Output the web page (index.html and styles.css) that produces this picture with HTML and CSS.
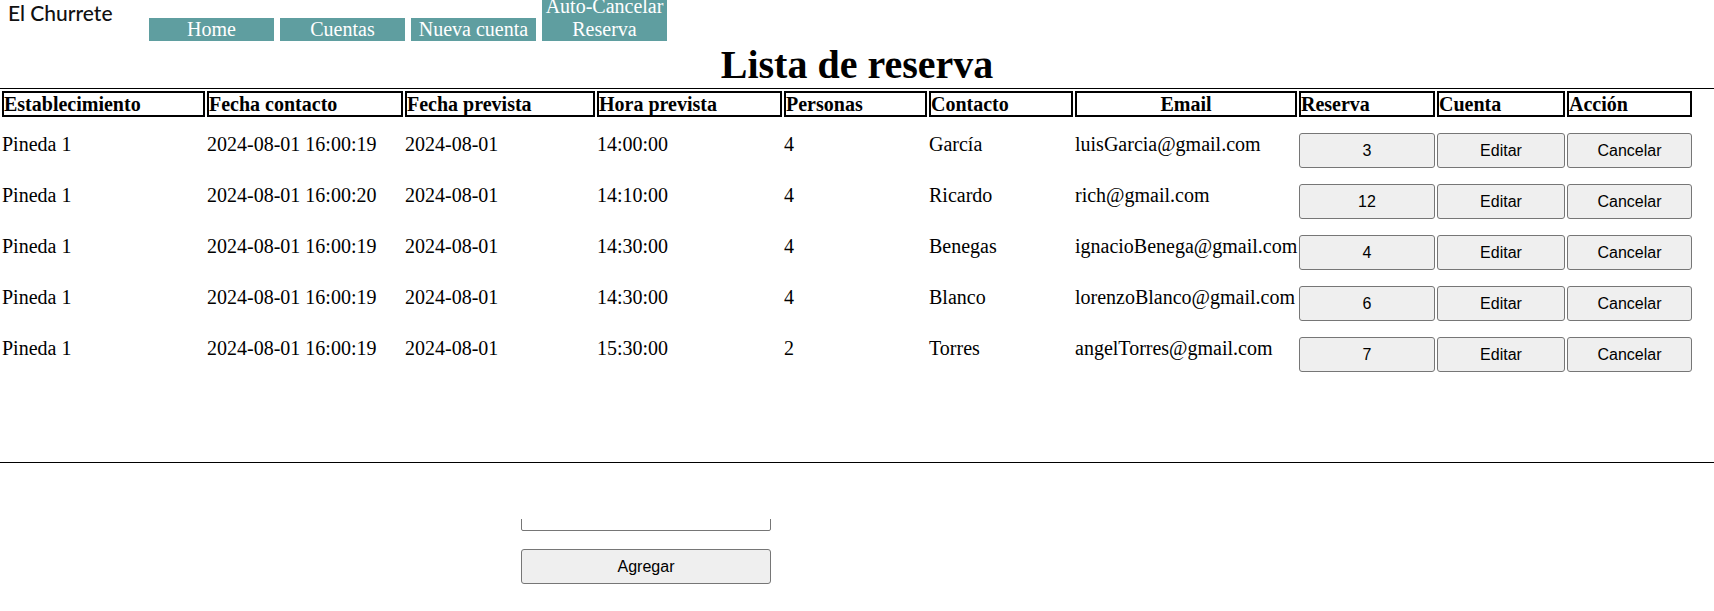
FILE: index.html
```html
<!DOCTYPE html>
<html lang="es">
<head>
<meta charset="utf-8">
<title>Lista de reserva</title>
<link rel="stylesheet" href="styles.css">
</head>
<body>
<header class="topbar">
  <div class="brand">El Churrete</div>
  <nav class="nav">
    <a class="nav-btn" href="#">Home</a>
    <a class="nav-btn" href="#">Cuentas</a>
    <a class="nav-btn" href="#">Nueva cuenta</a>
    <a class="nav-btn" href="#">Auto-Cancelar Reserva</a>
  </nav>
</header>
<h1 class="title">Lista de reserva</h1>
<div class="table-wrap">
  <table class="res-table">
    <thead>
      <tr>
        <th class="c1">Establecimiento</th>
        <th class="c2">Fecha contacto</th>
        <th class="c3">Fecha prevista</th>
        <th class="c4">Hora prevista</th>
        <th class="c5">Personas</th>
        <th class="c6">Contacto</th>
        <th class="c7 center">Email</th>
        <th class="c8">Reserva</th>
        <th class="c9">Cuenta</th>
        <th class="c10">Acción</th>
      </tr>
    </thead>
    <tbody>
      <tr>
        <td>Pineda 1</td><td>2024-08-01 16:00:19</td><td>2024-08-01</td><td>14:00:00</td><td>4</td><td>García</td><td>luisGarcia@gmail.com</td>
        <td class="act"><button class="row-btn">3</button></td><td class="act"><button class="row-btn">Editar</button></td><td class="act"><button class="row-btn">Cancelar</button></td>
      </tr>
      <tr>
        <td>Pineda 1</td><td>2024-08-01 16:00:20</td><td>2024-08-01</td><td>14:10:00</td><td>4</td><td>Ricardo</td><td>rich@gmail.com</td>
        <td class="act"><button class="row-btn">12</button></td><td class="act"><button class="row-btn">Editar</button></td><td class="act"><button class="row-btn">Cancelar</button></td>
      </tr>
      <tr>
        <td>Pineda 1</td><td>2024-08-01 16:00:19</td><td>2024-08-01</td><td>14:30:00</td><td>4</td><td>Benegas</td><td>ignacioBenega@gmail.com</td>
        <td class="act"><button class="row-btn">4</button></td><td class="act"><button class="row-btn">Editar</button></td><td class="act"><button class="row-btn">Cancelar</button></td>
      </tr>
      <tr>
        <td>Pineda 1</td><td>2024-08-01 16:00:19</td><td>2024-08-01</td><td>14:30:00</td><td>4</td><td>Blanco</td><td>lorenzoBlanco@gmail.com</td>
        <td class="act"><button class="row-btn">6</button></td><td class="act"><button class="row-btn">Editar</button></td><td class="act"><button class="row-btn">Cancelar</button></td>
      </tr>
      <tr>
        <td>Pineda 1</td><td>2024-08-01 16:00:19</td><td>2024-08-01</td><td>15:30:00</td><td>2</td><td>Torres</td><td>angelTorres@gmail.com</td>
        <td class="act"><button class="row-btn">7</button></td><td class="act"><button class="row-btn">Editar</button></td><td class="act"><button class="row-btn">Cancelar</button></td>
      </tr>
    </tbody>
  </table>
</div>
<div class="add-form">
  <div class="input-clip"><input class="add-input" type="text"></div>
  <button class="add-btn">Agregar</button>
</div>
</body>
</html>
```
FILE: styles.css
```css
html, body {
  margin: 0;
  padding: 0;
  background: #fff;
}
body {
  font-family: "Liberation Serif", "Times New Roman", serif;
  font-size: 20px;
  color: #000;
}

/* top bar */
.topbar {
  display: flex;
  align-items: flex-end;
  margin-top: -5px;
}
.brand {
  align-self: flex-start;
  width: 141px;
  padding-left: 8px;
  margin-top: 5px;
  font-family: Lato, "Open Sans", sans-serif;
  font-size: 21px;
  line-height: 25px;
  font-weight: 500;
  color: #111;
}
.nav {
  display: flex;
  align-items: flex-end;
  gap: 6px;
}
.nav-btn {
  display: block;
  width: 125px;
  background: #5f9ea0;
  color: #fff;
  text-align: center;
  font-size: 20px;
  line-height: 23px;
  text-decoration: none;
}

/* title */
.title {
  margin: 2px 0 1px;
  font-size: 40px;
  line-height: 44px;
  font-weight: bold;
  text-align: center;
}

/* table */
.table-wrap {
  border-top: 1px solid #000;
  border-bottom: 1px solid #000;
  height: 373px;
}
.res-table {
  border-collapse: separate;
  border-spacing: 2px;
  table-layout: fixed;
  width: 1694px;
}
.res-table th {
  box-sizing: border-box;
  border: 2px solid #000;
  padding: 0;
  text-align: left;
  font-weight: bold;
  line-height: 22px;
  white-space: nowrap;
}
.res-table th.center { text-align: center; }
.c1 { width: 203px; }
.c2 { width: 196px; }
.c3 { width: 190px; }
.c4 { width: 185px; }
.c5 { width: 143px; }
.c6 { width: 144px; }
.c7 { width: 222px; }
.c8 { width: 136px; }
.c9 { width: 128px; }
.c10 { width: 125px; }

.res-table td {
  padding: 14px 0 0;
  vertical-align: top;
  white-space: nowrap;
  overflow: visible;
}
.res-table td.act {
  padding: 14px 0 0;
}
.row-btn {
  display: block;
  box-sizing: border-box;
  width: 100%;
  height: 35px;
  padding: 0;
  font-family: "Liberation Sans", Arial, sans-serif;
  font-size: 16px;
  color: #000;
  background: #efefef;
  border: 1px solid #767676;
  border-radius: 3px;
}

/* bottom form */
.add-form {
  display: flex;
  flex-direction: column;
  align-items: flex-start;
  padding-left: 521px;
  padding-top: 56px;
}
.input-clip {
  width: 250px;
  height: 12px;
  overflow: hidden;
  display: flex;
  align-items: flex-end;
}
.add-input {
  box-sizing: border-box;
  width: 250px;
  height: 30px;
  flex: none;
  border: 1px solid #767676;
  border-radius: 2px;
  background: #fff;
}
.add-btn {
  box-sizing: border-box;
  width: 250px;
  height: 35px;
  margin-top: 18px;
  padding: 0;
  font-family: "Liberation Sans", Arial, sans-serif;
  font-size: 16px;
  color: #000;
  background: #efefef;
  border: 1px solid #767676;
  border-radius: 3px;
}
```
